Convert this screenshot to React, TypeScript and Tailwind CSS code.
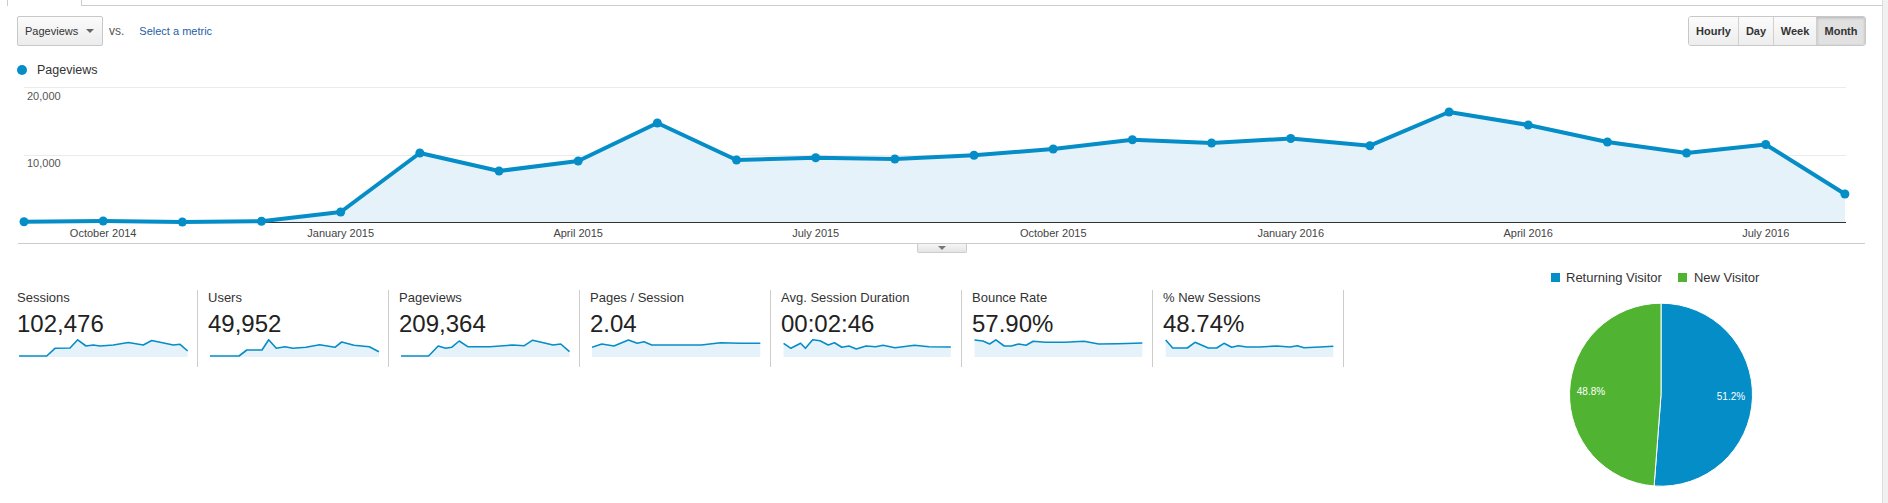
import React from "react";

// pixel y of each month inside the chart svg (baseline = 142.5)
const lineYs = [141.7, 141, 142, 141.3, 132, 73, 91, 81, 43, 80, 77.7, 79, 75.3, 69, 59.7, 63, 58.5, 65.7, 32, 45, 62, 73, 64.5, 114];
const pointX = (i: number) => 6 + i * 79.17;

const xLabels = [
  { i: 1, t: "October 2014" },
  { i: 4, t: "January 2015" },
  { i: 7, t: "April 2015" },
  { i: 10, t: "July 2015" },
  { i: 13, t: "October 2015" },
  { i: 16, t: "January 2016" },
  { i: 19, t: "April 2016" },
  { i: 22, t: "July 2016" },
];

type Pt = [number, number];

const metrics: { label: string; value: string; pts: Pt[] }[] = [
  {
    label: "Sessions",
    value: "102,476",
    pts: [[0, 17], [27.7, 17], [36, 9.3], [51, 9], [58.7, 0.8], [67, 7], [74.3, 6], [81, 7], [94.3, 6], [109.3, 3.5], [124.3, 6], [132.7, 1.5], [154.3, 6], [161, 5.3], [168.7, 12]],
  },
  {
    label: "Users",
    value: "49,952",
    pts: [[0, 17], [29, 17], [36.8, 11], [52, 11], [58.7, 0.8], [66.3, 9.3], [75, 7.7], [82.8, 9.3], [96, 8.3], [109.6, 5.7], [124.9, 8.3], [131.7, 3], [144, 6.3], [159.3, 7.7], [168.9, 12.7]],
  },
  {
    label: "Pageviews",
    value: "209,364",
    pts: [[0, 17], [27.6, 17], [37.2, 7], [44.8, 9.3], [50.6, 8.3], [58.2, 2], [66.7, 7.7], [88.9, 7.7], [111.8, 6], [123.3, 6.7], [131.7, 1.2], [142.4, 3.7], [152, 6], [159.7, 5], [168.5, 12.7]],
  },
  {
    label: "Pages / Session",
    value: "2.04",
    pts: [[0, 8.3], [9.8, 5], [21.9, 7], [36.5, 1], [45.2, 4.3], [52, 2.7], [59.7, 6], [85, 6], [109.2, 6], [128.6, 3.7], [148, 4.3], [168.3, 4.3]],
  },
  {
    label: "Avg. Session Duration",
    value: "00:02:46",
    pts: [[0.6, 4.3], [7.9, 9.3], [17.6, 4.3], [22.4, 9.3], [29.7, 0.8], [37, 1.7], [45.2, 6], [51.5, 3.7], [58.8, 8.3], [66, 7], [73.3, 10], [83, 7], [92.7, 7.7], [100, 6.3], [112, 8.7], [131.5, 6.3], [146, 7.7], [167.8, 8]],
  },
  {
    label: "Bounce Rate",
    value: "57.90%",
    pts: [[0.5, 1], [9, 2], [15.6, 5], [21.9, 0.8], [30.2, 7], [37.4, 7], [44.7, 5], [52, 6.3], [59.2, 2.3], [71.4, 3.3], [90.7, 3.3], [110, 2.3], [124.7, 5], [144, 4.7], [168.3, 4]],
  },
  {
    label: "% New Sessions",
    value: "48.74%",
    pts: [[0.7, 1], [7.7, 9], [22.3, 9], [30, 3.3], [43.3, 9], [51.7, 9], [59, 4.3], [66.7, 8.3], [73.3, 6.7], [81.7, 8], [95, 8], [111.7, 7], [125, 8], [132.3, 6.7], [139, 8.7], [155, 8], [168.3, 7.3]],
  },
];

const Sparkline = ({ pts }: { pts: Pt[] }) => {
  const line = pts.map((p) => p.join(",")).join(" ");
  const area = `${pts[0][0]},18 ${line} ${pts[pts.length - 1][0]},18`;
  return (
    <svg width={170} height={19} className="block">
      <polygon points={area} fill="#e6f2f9" />
      <polyline points={line} fill="none" stroke="#058dc7" strokeWidth={1.6} strokeLinejoin="round" />
    </svg>
  );
};

const TrendChart = () => {
  const pts = lineYs.map((y, i) => `${pointX(i)},${y}`).join(" ");
  const area = `${pointX(0)},142.5 ${pts} ${pointX(lineYs.length - 1)},142.5`;
  return (
    <svg width={1847} height={163} className="block">
      <line x1={6} x2={1828} y1={7.5} y2={7.5} stroke="#ebebeb" />
      <line x1={6} x2={1828} y1={75.5} y2={75.5} stroke="#ebebeb" />
      <text x={9} y={20} fontSize={11} fill="#555">20,000</text>
      <text x={9} y={87} fontSize={11} fill="#555">10,000</text>
      <polygon points={area} fill="#e6f2f9" />
      <line x1={6} x2={1828} y1={142.5} y2={142.5} stroke="#333" />
      <polyline points={pts} fill="none" stroke="#058dc7" strokeWidth={4} strokeLinejoin="round" />
      {lineYs.map((y, i) => (
        <circle key={i} cx={pointX(i)} cy={y} r={4.5} fill="#058dc7" />
      ))}
      {xLabels.map((l) => (
        <text key={l.t} x={pointX(l.i)} y={157} fontSize={11} fill="#444" textAnchor="middle">
          {l.t}
        </text>
      ))}
    </svg>
  );
};

const VisitorPie = () => {
  // 51.2% returning (blue) from 12 o'clock clockwise, rest new (green)
  return (
    <svg width={220} height={192} className="block">
      <path d="M110,98.7 L110,7.2 A91.5,91.5 0 1 1 103.11,189.94 Z" fill="#058dc7" stroke="#fff" strokeWidth={1} />
      <path d="M110,98.7 L103.11,189.94 A91.5,91.5 0 0 1 110,7.2 Z" fill="#50b432" stroke="#fff" strokeWidth={1} />
      <text x={180} y={104} fontSize={10} fill="#fff" textAnchor="middle">51.2%</text>
      <text x={40} y={99} fontSize={10} fill="#fff" textAnchor="middle">48.8%</text>
    </svg>
  );
};

const ranges = [
  { label: "Hourly", w: "w-[49px]", active: false },
  { label: "Day", w: "w-[35px]", active: false },
  { label: "Week", w: "w-[43px]", active: false },
  { label: "Month", w: "w-[49px]", active: true },
];

export default function App() {
  return (
    <div className="flex w-[1888px] h-[503px] overflow-hidden bg-white font-['Liberation_Sans',Arial,sans-serif]">
      <div className="w-[1882px] shrink-0 flex flex-col">
        {/* tab strip */}
        <div className="flex h-[6px]">
          <div className="w-[7px] border-b border-transparent" />
          <div className="w-[75px] border-l border-r border-[#ccc]" />
          <div className="flex-1 border-b border-[#ccc]" />
        </div>

        {/* metric picker + range buttons */}
        <div className="mt-[10px] h-[30px] flex items-center pl-[17px] pr-[16px]">
          <div className="flex items-center w-[86px] h-[30px] border border-[#c8c8c8] rounded-[2px] bg-linear-to-b from-[#fbfbfb] to-[#ececec] pl-[7px] text-[11px] text-[#333]">
            Pageviews
            <span className="ml-auto mr-[8px] w-0 h-0 border-l-[4px] border-r-[4px] border-t-[4px] border-l-transparent border-r-transparent border-t-[#666]" />
          </div>
          <span className="ml-[6px] text-[12px] text-[#555]">vs.</span>
          <span className="ml-[15px] text-[11px] text-[#1f5ea8]">Select a metric</span>
          <div className="ml-auto flex h-[30px] border border-[#c8c8c8] rounded-[3px] overflow-hidden">
            {ranges.map((r, i) => (
              <div
                key={r.label}
                className={`${r.w} flex items-center justify-center text-[11px] font-bold text-[#333] ${i > 0 ? "border-l border-[#d0d0d0]" : ""} ${r.active ? "bg-[#e1e1e1] shadow-[inset_0_1px_3px_rgba(0,0,0,0.2)]" : "bg-linear-to-b from-[#fbfbfb] to-[#ededed]"}`}
              >
                {r.label}
              </div>
            ))}
          </div>
        </div>

        {/* series legend */}
        <div className="mt-[16px] h-[16px] flex items-center pl-[17px]">
          <span className="w-[10px] h-[10px] rounded-full bg-[#058dc7]" />
          <span className="ml-[10px] text-[12.5px] text-[#333]">Pageviews</span>
        </div>

        {/* main chart */}
        <div className="mt-[2px] ml-[18px] w-[1847px] h-[164px] border-b border-[#ccc]">
          <TrendChart />
        </div>
        <div className="ml-[18px] w-[1847px] flex justify-center">
          <div className="w-[50px] h-[9px] border border-t-0 border-[#ccc] rounded-b-[2px] bg-linear-to-b from-[#f6f6f6] to-[#e4e4e4] flex justify-center pt-[2px]">
            <span className="w-0 h-0 border-l-[4px] border-r-[4px] border-t-[4px] border-l-transparent border-r-transparent border-t-[#777]" />
          </div>
        </div>

        {/* scorecards + pie */}
        <div className="flex">
          <div className="flex pl-[7px] pt-[37px]">
            {metrics.map((m) => (
              <div key={m.label} className="w-[191px] h-[77px] shrink-0 border-r border-[#ccc] pl-[10px]">
                <div className="text-[13px] leading-[15px] text-[#333]">{m.label}</div>
                <div className="mt-[5px] text-[24px] leading-[28px] text-[#222]">{m.value}</div>
                <div className="mt-px ml-[2px]">
                  <Sparkline pts={m.pts} />
                </div>
              </div>
            ))}
          </div>
          <div className="ml-[207px] pt-[17px] w-[220px] shrink-0">
            <div className="h-[15px] flex items-center text-[13px] text-[#333] whitespace-nowrap">
              <span className="w-[9px] h-[9px] bg-[#058dc7]" />
              <span className="ml-[6px]">Returning Visitor</span>
              <span className="ml-[16px] w-[9px] h-[9px] bg-[#50b432]" />
              <span className="ml-[7px]">New Visitor</span>
            </div>
            <div className="mt-[11px]">
              <VisitorPie />
            </div>
          </div>
        </div>
      </div>
      <div className="flex-1 bg-[#f1f1f1] border-l border-[#dcdcdc]" />
    </div>
  );
}
